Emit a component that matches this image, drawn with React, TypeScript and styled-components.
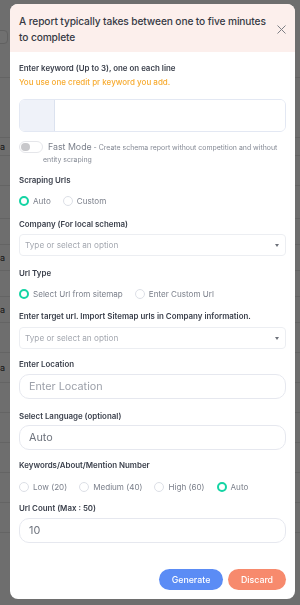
import React from "react";
import styled, { createGlobalStyle } from "styled-components";

const GlobalStyle = createGlobalStyle`
  html, body { margin: 0; padding: 0; }
  body {
    background: #ffffff;
    font-family: Inter, "Noto Sans", "Liberation Sans", sans-serif;
    -webkit-font-smoothing: antialiased;
  }
  * { box-sizing: border-box; }
`;

/* ---------- background page (under the overlay) ---------- */
const Page = styled.div`
  width: 300px;
  height: 605px;
  overflow: hidden;
  background: #fafafa;
  padding-top: 30px;
`;

const PageCard = styled.div`
  width: 16px;
  height: 14px;
  margin-left: -8px;
  border: 1px solid #dcdcdc;
  border-radius: 4px;
  background: #fff;
`;

const PageRow = styled.div<{ $h: number }>`
  height: ${(p) => p.$h}px;
  border-bottom: 1px solid #e4e4e4;
  font-size: 9px;
  color: #333;
  display: flex;
  align-items: center;
  font-family: Inter, sans-serif;
`;

/* ---------- overlay + modal ---------- */
const Overlay = styled.div`
  position: fixed;
  inset: 0;
  background: rgba(0, 0, 0, 0.56);
  padding: 4px 5px 6px 10px;
`;

const Modal = styled.div`
  width: 285px;
  height: 595px;
  background: #ffffff;
  border-radius: 8px;
  overflow: hidden;
  display: flex;
  flex-direction: column;
`;

const Header = styled.div`
  background: #fcefec;
  padding: 9px 8px 7px 9px;
  display: flex;
  align-items: center;
  gap: 8px;
`;

const Title = styled.h2`
  margin: 0;
  flex: 1;
  font-size: 10.2px;
  line-height: 16px;
  font-weight: 500;
  color: #363a44;
  letter-spacing: -0.12px;
`;

const CloseButton = styled.button`
  border: 0;
  background: transparent;
  padding: 0;
  width: 12px;
  height: 12px;
  display: flex;
  align-items: center;
  justify-content: center;
  cursor: pointer;
`;

const Body = styled.div`
  flex: 1;
  padding: 10px 9px 0 9px;
  display: flex;
  flex-direction: column;
`;

const Label = styled.div<{ $gap?: number }>`
  font-size: 7.9px;
  line-height: 12px;
  font-weight: 600;
  color: #3b404c;
  margin-bottom: ${(p) => (p.$gap ?? 4)}px;
`;

const Note = styled.div`
  font-size: 8px;
  line-height: 12px;
  font-weight: 500;
  color: #f7ab30;
  margin-top: 2px;
`;

const Section = styled.div<{ $top?: number }>`
  margin-top: ${(p) => p.$top ?? 11}px;
  display: flex;
  flex-direction: column;
`;

const KeywordBox = styled.div`
  margin-top: 11px;
  height: 33px;
  border: 1px solid #e3e8f3;
  border-radius: 6px;
  display: flex;
  overflow: hidden;
`;

const Gutter = styled.div`
  width: 35px;
  background: #eff2f9;
  border-right: 1px solid #dbe2ef;
`;

const KeywordArea = styled.textarea`
  flex: 1;
  border: 0;
  resize: none;
  outline: none;
  background: #fff;
  font-family: inherit;
  font-size: 9px;
`;

const ToggleRow = styled.div`
  margin-top: 9px;
  display: flex;
  align-items: flex-start;
`;

const Toggle = styled.div`
  flex: none;
  width: 24px;
  height: 12px;
  border: 1px solid #e5e6ea;
  border-radius: 6px;
  background: #fff;
  display: flex;
  align-items: center;
  padding-left: 1px;
`;

const Knob = styled.div`
  width: 8.5px;
  height: 8.5px;
  border-radius: 50%;
  background: #c8c8cb;
`;

const ToggleText = styled.p`
  margin: 0;
  text-indent: 5px;
  font-size: 6.95px;
  line-height: 12px;
  color: #858a95;
`;

const ToggleTitle = styled.span`
  font-size: 8.8px;
  color: #7c818c;
`;

const RadioRow = styled.div`
  display: flex;
  align-items: center;
  gap: 12px;
  height: 10px;
`;

const RadioItem = styled.label`
  display: flex;
  align-items: center;
  gap: 4px;
  font-size: 8.1px;
  color: #7a7f8a;
  white-space: nowrap;
`;

const RadioDot = styled.span<{ $on?: boolean }>`
  width: 10px;
  height: 10px;
  border-radius: 50%;
  background: #fff;
  border: ${(p) => (p.$on ? "2.6px solid #14d4a4" : "1px solid #dcdfe6")};
  flex: none;
`;

const Select = styled.div`
  height: 22px;
  border: 1px solid #eceef2;
  border-radius: 4px;
  display: flex;
  align-items: center;
  justify-content: space-between;
  padding: 0 6px 0 5px;
  font-size: 8.2px;
  color: #a4a8b0;
`;

const Caret = styled.span`
  width: 0;
  height: 0;
  border-left: 2.5px solid transparent;
  border-right: 2.5px solid transparent;
  border-top: 3px solid #6d717a;
`;

const TextInput = styled.input`
  height: 25px;
  border: 1px solid #e6e8ef;
  border-radius: 10px;
  padding: 0 9px;
  font-family: inherit;
  font-size: 10.8px;
  color: #6e737d;
  outline: none;
  background: #fff;
  &::placeholder { color: #9da1aa; }
`;

const Footer = styled.div`
  display: flex;
  justify-content: flex-end;
  gap: 5px;
  padding: 0 9px 9px 9px;
`;

const Button = styled.button<{ $tone: "primary" | "danger" }>`
  height: 21px;
  border: 0;
  border-radius: 11px;
  padding: 0;
  width: ${(p) => (p.$tone === "primary" ? 64 : 58)}px;
  background: ${(p) => (p.$tone === "primary" ? "#5b8cf5" : "#f78a6d")};
  color: #fff;
  font-family: inherit;
  font-size: 8.8px;
  font-weight: 500;
  cursor: pointer;
`;

const Radio = ({ label, on }: { label: string; on?: boolean }) => (
  <RadioItem>
    <RadioDot $on={on} />
    {label}
  </RadioItem>
);

const pageRows: { h: number; t?: string }[] = [
  { h: 34 },
  { h: 60 },
  { h: 18, t: "a" },
  { h: 30 },
  { h: 33 },
  { h: 26 },
  { h: 26, t: "a" },
  { h: 26 },
  { h: 26, t: "a" },
  { h: 30 },
  { h: 30, t: "a" },
  { h: 30 },
  { h: 30 },
  { h: 30 },
  { h: 30 },
  { h: 30 },
];

export default function App() {
  return (
    <>
      <GlobalStyle />
      <Page>
        <PageCard />
        {pageRows.map((r, i) => (
          <PageRow key={i} $h={r.h}>
            {r.t}
          </PageRow>
        ))}
      </Page>
      <Overlay>
        <Modal>
          <Header>
            <Title>A report typically takes between one to five minutes to complete</Title>
            <CloseButton aria-label="Close">
              <svg width="9" height="9" viewBox="0 0 9 9">
                <path d="M0.5 0.5 L8.5 8.5 M8.5 0.5 L0.5 8.5" stroke="#7d7f85" strokeWidth="1" />
              </svg>
            </CloseButton>
          </Header>
          <Body>
            <Label $gap={0}>Enter keyword (Up to 3), one on each line</Label>
            <Note>You use one credit pr keyword you add.</Note>
            <KeywordBox>
              <Gutter />
              <KeywordArea />
            </KeywordBox>
            <ToggleRow>
              <Toggle>
                <Knob />
              </Toggle>
              <ToggleText>
                <ToggleTitle>Fast Mode</ToggleTitle> - Create schema report without competition and without entity scraping
              </ToggleText>
            </ToggleRow>

            <Section $top={8}>
              <Label $gap={10}>Scraping Urls</Label>
              <RadioRow>
                <Radio label="Auto" on />
                <Radio label="Custom" />
              </RadioRow>
            </Section>

            <Section $top={12}>
              <Label>Company (For local schema)</Label>
              <Select>
                Type or select an option
                <Caret />
              </Select>
            </Section>

            <Section>
              <Label $gap={10}>Url Type</Label>
              <RadioRow>
                <Radio label="Select Url from sitemap" on />
                <Radio label="Enter Custom Url" />
              </RadioRow>
            </Section>

            <Section>
              <Label $gap={5}>Enter target url. Import Sitemap urls in Company information.</Label>
              <Select>
                Type or select an option
                <Caret />
              </Select>
            </Section>

            <Section $top={8.5}>
              <Label $gap={4}>Enter Location</Label>
              <TextInput placeholder="Enter Location" />
            </Section>

            <Section>
              <Label $gap={3}>Select Language (optional)</Label>
              <TextInput defaultValue="Auto" />
            </Section>

            <Section $top={9}>
              <Label $gap={11}>Keywords/About/Mention Number</Label>
              <RadioRow>
                <Radio label="Low (20)" />
                <Radio label="Medium (40)" />
                <Radio label="High (60)" />
                <Radio label="Auto" on />
              </RadioRow>
            </Section>

            <Section $top={10}>
              <Label $gap={4}>Url Count (Max : 50)</Label>
              <TextInput defaultValue="10" />
            </Section>
          </Body>
          <Footer>
            <Button $tone="primary">Generate</Button>
            <Button $tone="danger">Discard</Button>
          </Footer>
        </Modal>
      </Overlay>
    </>
  );
}
